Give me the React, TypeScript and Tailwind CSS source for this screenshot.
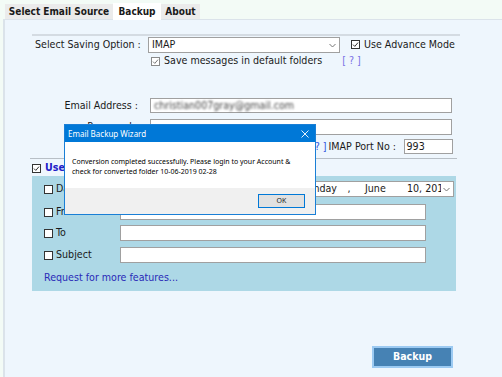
import React from 'react';

const UI_FONT = "font-['DejaVu_Sans_Condensed','DejaVu_Sans',sans-serif]";
const DLG_FONT = "font-['Noto_Sans','Open_Sans',sans-serif]";

function Check({ checked = false, muted = false }: { checked?: boolean; muted?: boolean }) {
    return (
        <svg width="9" height="9" viewBox="0 0 9 9" className="shrink-0">
            <rect x="0.5" y="0.5" width="8" height="8" fill="white" stroke={muted ? '#8a8a8a' : '#333'} />
            {checked && (
                <path d="M2 4.6 L3.8 6.4 L7 2.6" fill="none" stroke={muted ? '#777' : '#333'} strokeWidth="1" />
            )}
        </svg>
    );
}

function Chevron() {
    return (
        <svg width="7" height="5" viewBox="0 0 7 5" className="shrink-0">
            <path d="M0.5 1 L3.5 4 L6.5 1" fill="none" stroke="#777" />
        </svg>
    );
}

function Field({ className = '', children }: { className?: string; children?: React.ReactNode }) {
    return (
        <div className={`border border-[#a0a0a0] bg-white flex items-center ${className}`}>
            {children}
        </div>
    );
}

export default function App() {
    return (
        <main className={`relative w-[502px] h-[377px] overflow-hidden bg-[#f3fbf6] text-[#1a1a1a] ${UI_FONT}`}>
            {/* Tabs */}
            <nav className="h-[19px] flex items-end pl-[5px] text-[10px] font-bold">
                <div className="h-[15px] w-[108px] bg-[#ebebeb] flex items-center justify-center">Select Email Source</div>
                <div className="h-[17px] w-[48px] bg-white flex items-start pt-px justify-center -mb-px relative z-10">Backup</div>
                <div className="h-[15px] w-[39px] bg-[#ebebeb] flex items-center justify-center">About</div>
            </nav>

            {/* Panel */}
            <section className="ml-[3px] h-[358px] border-l-2 border-t border-[#dbe3ea] bg-[#eef6fd] text-[10.6px]">
                <div className="mt-[14px] ml-[27px] w-[428px] h-[2px] bg-[#d4dbe2]" />

                <div className="mt-px h-[16px] flex items-center">
                    <span className="ml-[30px] w-[113px]">Select Saving Option :</span>
                    <Field className="w-[192px] h-[16px] justify-between px-[3px]">
                        <span>IMAP</span>
                        <Chevron />
                    </Field>
                    <span className="ml-[11px] flex items-center gap-[4px]">
                        <Check checked />
                        Use Advance Mode
                    </span>
                </div>

                <div className="mt-[3px] h-[10px] flex items-center ml-[146px] gap-[4px]">
                    <Check checked muted />
                    <span>Save messages in default folders</span>
                    <span className="ml-[16px] text-[#7a72e6]">[ ? ]</span>
                </div>

                <div className="mt-[32px] h-[15px] flex items-center">
                    <span className="w-[133px] text-right">Email Address :</span>
                    <Field className="ml-[12px] w-[302px] h-[15px] px-[3px]">
                        <span className="text-[#444] blur-[1.3px]">christian007gray@gmail.com</span>
                    </Field>
                </div>

                <div className="mt-[6px] h-[16px] flex items-center">
                    <span className="w-[133px] text-right">Password :</span>
                    <Field className="ml-[12px] w-[302px] h-[16px]" />
                </div>

                <div className="mt-[4px] h-[15px] flex items-center">
                    <span className="ml-[303px] text-[#3355dd]">[ ? ]</span>
                    <span className="ml-[2px] w-[75px]">IMAP Port No :</span>
                    <Field className="w-[49px] h-[15px] px-[2px]">993</Field>
                </div>

                <div className="mt-[4px] ml-[25px] w-[427px] h-px bg-[#b8bfc6]" />

                <div className="mt-[4px] h-[10px] flex items-center ml-[27px] gap-[4px]">
                    <Check checked />
                    <span className="font-bold text-[#2020c8]">Use Filter</span>
                </div>

                {/* Filters */}
                <div className="mt-[3px] ml-[27px] w-[424px] h-[115px] bg-[#add8e6] pt-[5px] pl-[12px]">
                    <div className="h-[16px] flex items-center">
                        <Check />
                        <span className="ml-[3px] w-[64px]">Date</span>
                        <Field className="w-[334px] h-[16px] pr-[3px] whitespace-nowrap">
                            <span className="w-[216px] shrink-0 text-right">Monday</span>
                            <span className="w-[24px] shrink-0 text-center">,</span>
                            <span className="w-[46px] shrink-0 pl-[4px]">June</span>
                            <span className="w-[34px] shrink-0 overflow-hidden">10, 2019</span>
                            <span className="ml-auto"><Chevron /></span>
                        </Field>
                    </div>
                    {['From', 'To', 'Subject'].map((label, i) => (
                        <div key={label} className={`${i === 0 ? 'mt-[7px]' : i === 1 ? 'mt-[5px]' : 'mt-[6px]'} h-[16px] flex items-center`}>
                            <Check />
                            <span className="ml-[3px] w-[64px]">{label}</span>
                            <Field className="w-[306px] h-[16px]" />
                        </div>
                    ))}
                    <div className="mt-[7px] text-[#2a2ab8]">Request for more features...</div>
                </div>

                <button className="mt-[55px] ml-[367px] w-[81px] h-[22px] border-2 border-[#9ccaf2] bg-[#4682b4] text-white font-bold text-[10.5px]">
                    Backup
                </button>
            </section>

            {/* Dialog */}
            <div className={`absolute left-[64px] top-[124px] w-[252px] h-[91px] border border-[#1a7fd6] bg-white flex flex-col ${DLG_FONT}`}>
                <div className="h-[17px] bg-[#0078d7] text-white text-[8px] flex items-center justify-between pl-[3px] pr-[6px]">
                    <span>Email Backup Wizard</span>
                    <svg width="8" height="8" viewBox="0 0 8 8"><path d="M0.5 0.5 L7.5 7.5 M7.5 0.5 L0.5 7.5" stroke="white" strokeWidth="0.9" /></svg>
                </div>
                <div className="h-[46px] pl-[7px] pt-[15px] text-[7px] leading-[10px] text-black">
                    <p>Conversion completed successfully. Please login to your Account &amp;</p>
                    <p>check for converted folder 10-06-2019 02-28</p>
                </div>
                <div className="flex-1 bg-[#f0f0f0] flex justify-end items-start pt-[6px] pr-[10px]">
                    <div className="w-[47px] h-[14px] border border-[#0078d7] bg-[#e1e1e1] text-[7px] flex items-center justify-center">OK</div>
                </div>
            </div>
        </main>
    );
}
